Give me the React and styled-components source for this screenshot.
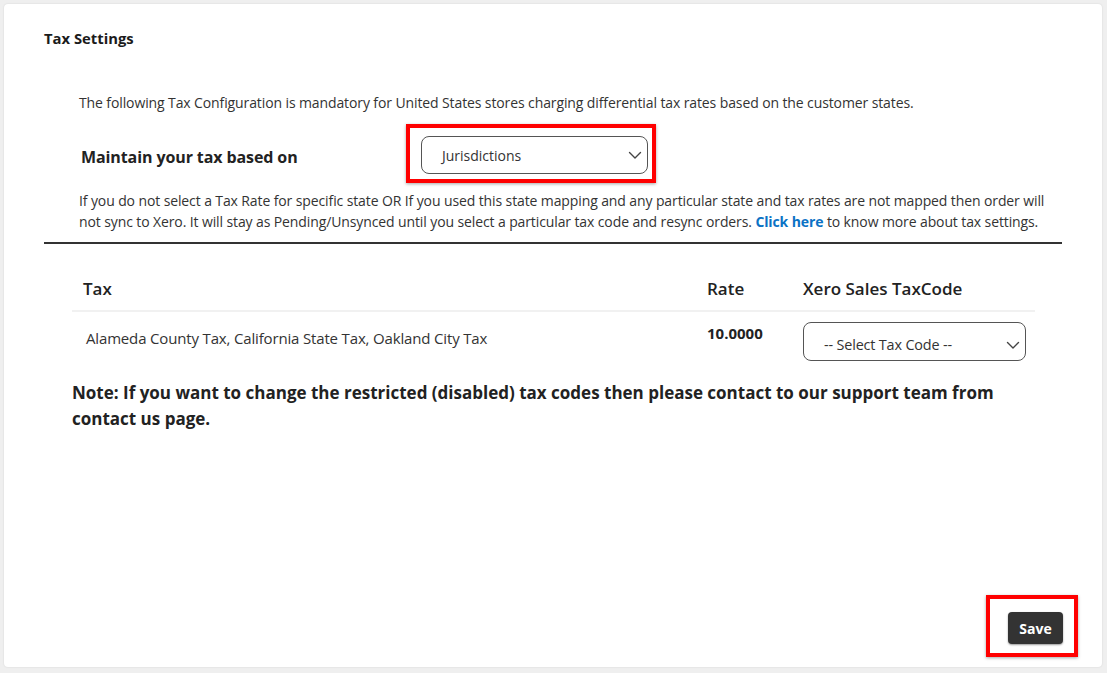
import React from 'react';
import styled, { createGlobalStyle } from 'styled-components';

const GlobalStyle = createGlobalStyle`
  body {
    margin: 0;
    background: #efefef;
    font-family: "Open Sans", "Noto Sans", sans-serif;
    color: #333;
  }
`

const Page = styled.div`
  padding: 4px 5px 6px 4px;
`

const Card = styled.div`
  background: #fff;
  height: 663px;
  border-radius: 4px;
  box-shadow: 0 0 2px rgba(0, 0, 0, 0.12);
  display: flex;
  flex-direction: column;
  box-sizing: border-box;
  padding-top: 24px;
`

const Title = styled.h2`
  margin: 0 0 0 40px;
  font-size: 14.8px;
  line-height: 20px;
  font-weight: 700;
  color: #1b1b1b;
`

const Content = styled.div`
  margin: 45px 0 0 75px;
  width: 985px;
`

const Text = styled.p`
  margin: 0;
  font-size: 14px;
  letter-spacing: -0.11px;
  line-height: ${(p) => p.lh || 20}px;
  color: #333;
`

const Link = styled.a`
  color: #0b72c5;
  font-weight: 700;
  text-decoration: none;
`

const MaintainRow = styled.div`
  display: flex;
  align-items: center;
  margin: 11px 0 7px;
  padding-left: 2px;
`

const Label = styled.div`
  width: 325px;
  font-size: 16px;
  letter-spacing: -0.1px;
  font-weight: 700;
  color: #222;
  padding-top: 6px;
`

const Highlight = styled.div`
  border: 4px solid #f00;
  box-shadow: 0 1px 3px rgba(0, 0, 0, 0.35);
  padding: ${(p) => p.pad};
  display: inline-flex;
`

const SelectBox = styled.div`
  box-sizing: border-box;
  width: ${(p) => p.w}px;
  height: ${(p) => p.h}px;
  border: 1px solid #555;
  border-radius: 8px;
  display: flex;
  align-items: center;
  justify-content: space-between;
  padding: 0 4px 0 ${(p) => p.pl}px;
  padding-top: ${(p) => p.pt || 0}px;
  font-size: ${(p) => p.fs || 14}px;
  color: #333;
  background: #fff;
`

const Rule = styled.hr`
  margin: 10px 40px 0 40px;
  border: none;
  height: 2px;
  background: #333;
`

const Table = styled.div`
  display: grid;
  grid-template-columns: 623px 96px 244px;
  margin: 24px 0 0 68px;
`

const Head = styled.div`
  padding: 10px 12px 10px ${(p) => p.pl || 12}px;
  font-size: 17px;
  line-height: 22px;
  font-weight: 600;
  color: #222;
  border-bottom: 2px solid #f1f1f1;
`

const Cell = styled.div`
  padding: ${(p) => p.pt}px 12px 0 ${(p) => p.pl || 12}px;
  font-size: 15px;
  letter-spacing: ${(p) => (p.bold ? '0' : '-0.16px')};
  line-height: 20px;
  font-weight: ${(p) => (p.bold ? 700 : 400)};
  color: ${(p) => (p.bold ? '#222' : '#333')};
`

const Note = styled.p`
  margin: 19px 0 0 68px;
  width: 960px;
  font-size: 17px;
  line-height: 26px;
  font-weight: 700;
  color: #222;
`

const Footer = styled.div`
  margin-top: auto;
  display: flex;
  justify-content: flex-end;
  padding: 0 24px 10px 0;
`

const SaveButton = styled.button`
  width: 55px;
  height: 32px;
  border: none;
  border-radius: 4px;
  background: #333;
  box-shadow: 0 1px 2px rgba(0, 0, 0, 0.4);
  color: #fff;
  font-family: inherit;
  font-size: 14px;
  font-weight: 700;
  cursor: pointer;
`

const Chevron = () => (
  <svg width="16" height="16" viewBox="0 0 16 16" fill="none">
    <path d="M2.5 5.5 L8 11 L13.5 5.5" stroke="#444" strokeWidth="1.4" strokeLinecap="round" strokeLinejoin="round" />
  </svg>
);

export default function App() {
  return (
    <Page>
      <GlobalStyle />
      <Card>
        <Title>Tax Settings</Title>
        <Content>
          <Text>
            The following Tax Configuration is mandatory for United States stores charging differential tax rates based on the customer states.
          </Text>
          <MaintainRow>
            <Label>Maintain your tax based on</Label>
            <Highlight pad="8px 4px 5px 11px">
              <SelectBox w={227} h={38} pl={20}>
                Jurisdictions
                <Chevron />
              </SelectBox>
            </Highlight>
          </MaintainRow>
          <Text lh={21}>
            If you do not select a Tax Rate for specific state OR If you used this state mapping and any particular state and tax rates are not mapped then order will not sync to Xero. It will stay as Pending/Unsynced until you select a particular tax code and resync orders.{' '}
            <Link href="#">Click here</Link> to know more about tax settings.
          </Text>
        </Content>
        <Rule />
        <Table>
          <Head pl={11}>Tax</Head>
          <Head>Rate</Head>
          <Head>Xero Sales TaxCode</Head>
          <Cell pt={16} pl={14}>Alameda County Tax, California State Tax, Oakland City Tax</Cell>
          <Cell pt={11} bold>10.0000</Cell>
          <Cell pt={10}>
            <SelectBox w={223} h={39} pl={20} pt={6} fs={14.4}>
              -- Select Tax Code --
              <Chevron />
            </SelectBox>
          </Cell>
        </Table>
        <Note>
          Note: If you want to change the restricted (disabled) tax codes then please contact to our support team from contact us page.
        </Note>
        <Footer>
          <Highlight pad="13px 11px 9px 18px">
            <SaveButton>Save</SaveButton>
          </Highlight>
        </Footer>
      </Card>
    </Page>
  );
}
